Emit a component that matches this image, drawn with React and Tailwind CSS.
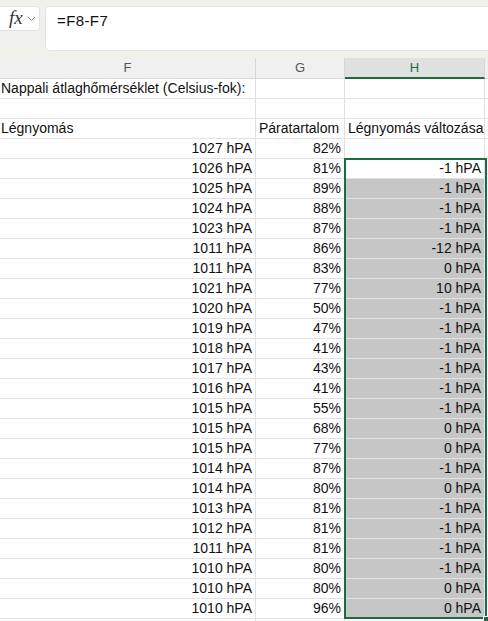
import React from "react";

const rows = [
  [1027, 82, null],
  [1026, 81, -1],
  [1025, 89, -1],
  [1024, 88, -1],
  [1023, 87, -1],
  [1011, 86, -12],
  [1011, 83, 0],
  [1021, 77, 10],
  [1020, 50, -1],
  [1019, 47, -1],
  [1018, 41, -1],
  [1017, 43, -1],
  [1016, 41, -1],
  [1015, 55, -1],
  [1015, 68, 0],
  [1015, 77, 0],
  [1014, 87, -1],
  [1014, 80, 0],
  [1013, 81, -1],
  [1012, 81, -1],
  [1011, 81, -1],
  [1010, 80, -1],
  [1010, 80, 0],
  [1010, 96, 0],
];

const cell = "h-[20px] border-b border-r border-[#e1e1e1] px-[3px] leading-[19px] whitespace-nowrap overflow-visible";

export default function App() {
  return (
    <div className="w-[488px] h-[621px] overflow-hidden bg-white text-[14px] text-[#111]" style={{ fontFamily: '"Liberation Sans", Arial, sans-serif' }}>
      {/* formula bar */}
      <div className="h-[58px] bg-[#eff1ea] flex items-start gap-[5px] pt-[6px] -ml-[4px]">
        <div className="w-[44px] h-[25px] bg-white rounded-[4px] border border-[#e3e3e3] flex items-center pl-[12px] gap-[4px]">
          <span className="italic text-[19px] text-[#333] leading-none -mt-[2px]" style={{ fontFamily: '"Liberation Serif", serif' }}>fx</span>
          <svg width="9" height="6" viewBox="0 0 9 6" className="mt-[1px]">
            <path d="M1 1l3.5 3.5L8 1" fill="none" stroke="#8a8a8a" strokeWidth="1" />
          </svg>
        </div>
        <div className="flex-1 h-[45px] bg-white rounded-l-[5px] border border-r-0 border-[#e3e3e3] pl-[11px] pt-[3px] text-[15px] tracking-[0.4px]">
          =F8-F7
        </div>
      </div>

      {/* column headers */}
      <div className="grid grid-cols-[256px_89px_140px_1fr] h-[21px] bg-[#f0f0f0] text-[13px] text-[#555]">
        <div className="border-r border-b border-[#d6d6d6] text-center leading-[20px]">F</div>
        <div className="border-r border-b border-[#d6d6d6] text-center leading-[20px]">G</div>
        <div className="border-r border-[#d6d6d6] bg-[#e0e0e0] border-b-2 border-b-[#1e6b42] text-center leading-[19px] text-[#1e6b42]">H</div>
        <div className="border-b border-[#d6d6d6]" />
      </div>

      {/* sheet body */}
      <div className="relative">
        <div className="grid grid-cols-[256px_89px_140px_1fr]">
          <div className={`${cell} pl-[1px]`}>Nappali átlaghőmérséklet (Celsius-fok):</div>
          <div className={cell} />
          <div className={cell} />
          <div className={cell} />

          <div className={cell} />
          <div className={cell} />
          <div className={cell} />
          <div className={cell} />

          <div className={`${cell} pl-[1px]`}>Légnyomás</div>
          <div className={cell}>Páratartalom</div>
          <div className={cell}>Légnyomás változása</div>
          <div className={cell} />

          {rows.map(([p, h, d], i) => (
            <React.Fragment key={i}>
              <div className={`${cell} text-right`}>{p} hPA</div>
              <div className={`${cell} text-right`}>{h}%</div>
              <div className={`${cell} text-right ${i > 1 ? "bg-[#c6c6c6] border-[#b4b4b4]" : ""}`}>
                {d === null ? "" : `${d} hPA`}
              </div>
              <div className={cell} />
            </React.Fragment>
          ))}
          <div className={cell} />
          <div className={cell} />
          <div className={cell} />
          <div className={cell} />
        </div>

        {/* selection outline */}
        <div className="absolute left-[344px] top-[79px] w-[143px] h-[461px] border-2 border-[#1e6b42] pointer-events-none" />
        <div className="absolute left-[483px] top-[537px] w-[6px] h-[6px] bg-[#1e6b42] border border-white" />
      </div>
    </div>
  );
}
